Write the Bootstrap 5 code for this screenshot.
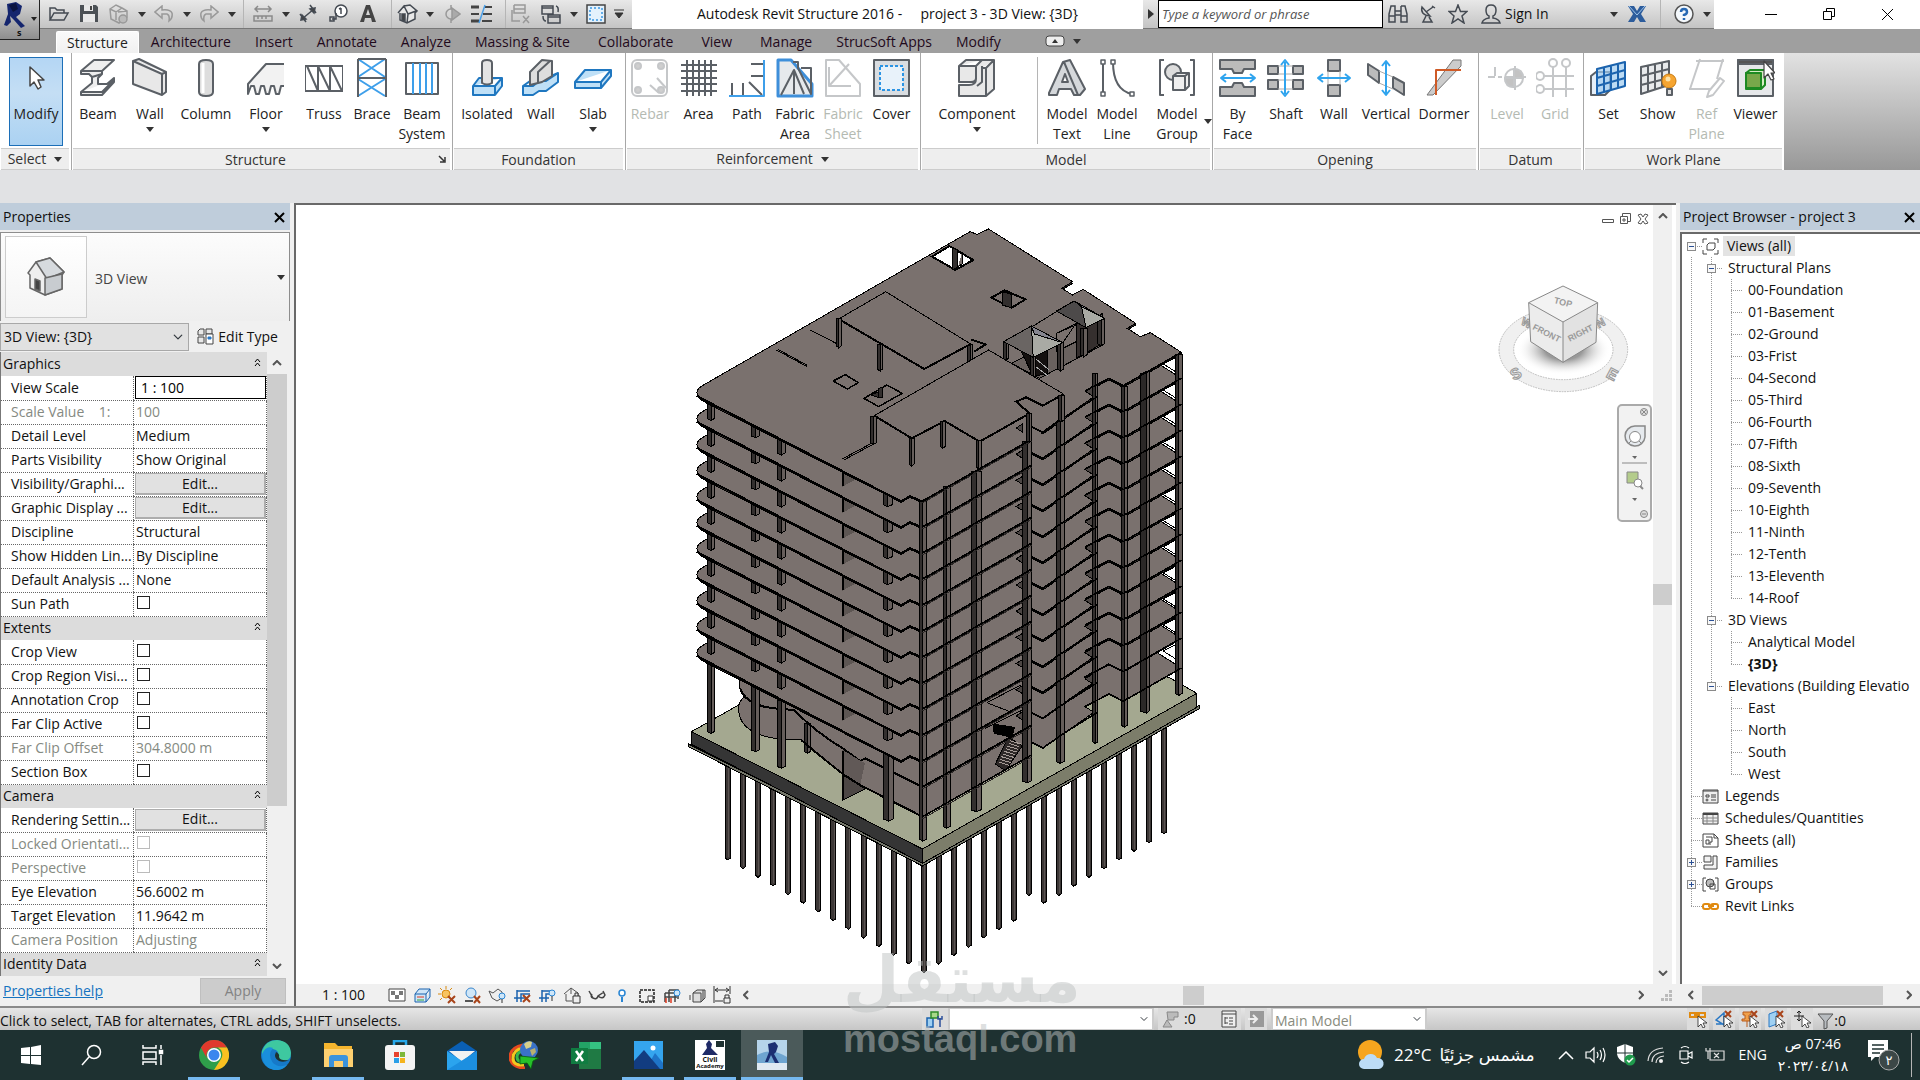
<!DOCTYPE html>
<html lang="en">
<head>
<meta charset="utf-8">
<meta name="viewport" content="width=device-width, initial-scale=1">
<title>Autodesk Revit Structure 2016</title>
<link href="https://cdn.jsdelivr.net/npm/bootstrap@5.3.0/dist/css/bootstrap.min.css" rel="stylesheet">
<style>
html,body{height:100%}
body{font-family:"Open Sans","Noto Sans","DejaVu Sans",sans-serif;font-size:14px;line-height:20px;color:#111;background:#f0f0f0;overflow:hidden}
button{font:inherit;color:inherit;background:none;border:0;padding:0}
svg{display:block;flex:none}
.ico{fill:none;stroke:#444a52;stroke-width:1.5}
.tools{background:linear-gradient(#e8e8e8,#c4c4c4);border-bottom:1px solid #777}
.titlebar{height:29px;background:#fff}
.titlebar button{height:28px}
.appcell{width:40px}
.titlebar .appbtn{z-index:5;left:0;top:0;width:40px;height:40px;background:linear-gradient(#d8d8d8,#8e8e8e);border:1px solid #222;border-left:0;border-top:0}
.t30{width:30px;display:flex;align-items:center;justify-content:center}
.t15{width:15px;display:flex;align-items:center;justify-content:center}
.vsep{width:1px;align-self:stretch;background:#b5b5b5}
.caret{width:0;height:0;border:4px solid transparent;border-top:5px solid #333;border-bottom:0;flex:none}
.kw{width:225px;height:28px;border:1px solid #000;border-radius:0;font-style:italic;font-size:13px;padding:0 3px;background:#fff}
.kw::placeholder{color:#555}
.winbtn{width:58px;display:flex;align-items:center;justify-content:center}
.tabs{height:24px;background:#9f9f9f;padding-left:56px}
.tabs .nav-link{padding:0 12px;height:22px;line-height:22px;color:#1f0a1c;border-radius:2px 2px 0 0}
.tabs .nav-link.active{background:linear-gradient(#fafafa,#f0f0f0);border:1px solid #fff;border-bottom:0;color:#222;padding:0 10px}
.ribbon{height:117px;background:linear-gradient(#e2e2e2,#989898)}
.pane{background:#fff;border-right:1px solid #a8a8a8;display:flex;flex-direction:column}
.pane-body{display:flex;flex:1;padding-top:4px}
.pane-name{height:22px;line-height:22px;background:#eee;border-top:1px solid #ccc;border-bottom:1px solid #ccc;text-align:center;color:#333;margin:0 2px 0 1px}
.rb{display:flex;flex-direction:column;align-items:center;line-height:20px;color:#222;white-space:nowrap;padding-top:1px!important}
.rb svg{width:38px;height:40px;margin-bottom:6px;fill:none;stroke:#5b6066;stroke-width:2;stroke-linejoin:round}
.rb .caret{margin-top:3px}
.rb:disabled{color:#b4bab2}
.rb:disabled svg{opacity:.35}
.rb.modify{background:linear-gradient(#b4d6f4,#c4def4 40%,#abd2f2);border:1px solid #1c6fb8;margin:0 8px 0 9px;width:54px;height:89px;padding-top:0!important}
.w40{width:40px}.w48{width:48px}.w49{width:49px}.w50{width:50px}.w52{width:52px}.w56{width:56px}.w60{width:60px}.w70{width:70px}.w112{width:112px}
.optbar{height:33px;background:#e1e2e4}
.side{background:#f0f0f0}
.side-title{height:27px;background:#bfcddb;padding:1px 5px 0 3px}
.left{width:290px}
.right{width:240px}
.typesel{height:89px;border:1px solid #8d8d8d;border-bottom:0;background:linear-gradient(#fcfcfc,#eee);padding:4px;margin-top:2px}
.thumbbox{width:82px;height:82px;border:1px solid #ccc;background:linear-gradient(#fff,#f4f4f4)}
.instrow{height:31px}
.combo{height:28px;border-radius:0;border:1px solid #a8a8a8;background-color:#e1e1e1;font-size:14px;line-height:20px;padding:2px 20px 2px 3px;color:#111;background-size:12px 10px;background-position:right 4px center}
.props{width:267px;table-layout:fixed;border-collapse:collapse;background:#fff;border-left:1px solid #777;margin:0}
.props td,.props th{height:24px;padding:0 2px;line-height:20px;font-weight:400;border:0;border-bottom:1px dotted #666;white-space:nowrap;overflow:hidden}
.props th[scope=row]{padding:0 0 0 10px}
.props td{border-left:1px dotted #666;border-right:1px dotted #666}
.props .grp th{background:#dcdcdc;border-bottom:0}
.props .off{color:#858a82}
.props input[type=checkbox]{width:13px;height:13px;border-radius:0;border:1px solid #222;margin:0 0 0 1px;vertical-align:0;background:#fff}
.props input:disabled{border-color:#bbb;opacity:1}
.props td.fill{padding:0 0 0 1px}
.editbtn{width:100%;height:22px;background:#e1e1e1;border:2px solid #adadad;border-top-width:1px;border-left-width:1px;display:block;line-height:18px}
.scalebox{width:100%;height:23px;border:1px solid #000;padding:0 5px;appearance:none;background:#fff;display:block}
.sbar{background:#f0f0f0}
.thumb{background:#cdcdcd}
.helprow{padding:1px 4px 2px 3px}
.apply{width:86px;height:26px;background:#ccc;border:1px solid #bfbfbf;color:#838383}
.canvas{background:#fff;border-top:2px solid #696969;border-left:2px solid #696969}
.model{left:364px;top:0;width:560px;height:780px;shape-rendering:crispEdges}
.viewcube{right:24px;top:78px}
.navbar-mini{right:1px;top:199px;width:35px;height:118px;border:2px solid #aaa;border-radius:5px;background:#f2f2f2}
.mdi{right:3px;top:7px}
.tree{background:#fff;border-top:2px solid #696969;border-left:2px solid #696969;padding-top:1px;margin-top:2px}
.tree li{display:flex;align-items:center;height:22px;white-space:nowrap;overflow:hidden}
.tree .c{width:20px;height:22px;flex:none;background-repeat:no-repeat;display:flex;align-items:center;justify-content:center;--v:repeating-linear-gradient(to bottom,#999 0 1px,transparent 1px 2px);--h:repeating-linear-gradient(to right,#999 0 1px,transparent 1px 2px)}
.tree .v{background-image:var(--v);background-size:1px 22px;background-position:9px 0}
.tree .t{background-image:var(--v),var(--h);background-size:1px 22px,11px 1px;background-position:9px 0,9px 11px}
.tree .e{background-image:var(--v),var(--h);background-size:1px 11px,11px 1px;background-position:9px 0,9px 11px}
.tree .s{background-image:var(--h);background-size:11px 1px;background-position:9px 11px}
.pm{width:9px;height:9px;border:1px solid #8a8a8a;background:#f8f8f8;position:relative;margin-right:1px}
.pm::before,.pm.plus::after{content:"";position:absolute;left:1px;top:3px;width:5px;height:1px;background:#2a4f94}
.pm.plus::after{left:3px;top:1px;width:1px;height:5px}
.l2,.l1,.l0{padding-left:6px}
.tree svg{width:17px;height:17px}
.status{height:24px;background:linear-gradient(#e6e6e6,#c6c6c6);border-top:2px solid #8a8a8a;overflow:hidden}
.status .cellb{height:22px;background:#dcdcdc;display:flex;align-items:center;justify-content:center}
.status select{height:24px;border:2px solid #ccc;border-radius:0;background-color:#fff;color:#888b7d;padding:2px 18px 0 2px;font-size:14px;line-height:20px;background-size:10px 8px;background-position:right 3px center;opacity:1}
.status select:disabled{background-color:#fff}
.viewtools-label{padding:0 20px 0 26px}
.seltools{margin-right:74px}
.taskbar{height:50px;background:#1e3131;color:#fff}
.tb{width:62px;height:50px;display:flex;align-items:center;justify-content:center;border-bottom:3px solid transparent!important;padding-top:3px!important}
.tb.sys{width:61px}
.tb.run{background:linear-gradient(#76b9f0,#76b9f0) no-repeat center bottom/52px 3px;border:0!important;padding-top:0!important}
.tb.cur{background:linear-gradient(#76b9f0,#76b9f0) no-repeat center bottom/62px 3px #4b5a5a}
.w30t{width:30px;display:flex;justify-content:center}
.weather{font-size:17px}
.clock{width:76px;line-height:22px}
.wm{left:843px;top:944px;width:234px;z-index:20;color:rgba(190,194,194,.5);text-align:center;pointer-events:none;font-weight:700}
.wm-ar{font-family:"DejaVu Sans",sans-serif;font-size:65px;line-height:72px;height:80px;white-space:nowrap}
.wm-en{font-family:"Liberation Sans",sans-serif;font-size:38px;line-height:30px}
</style>
<script src="https://cdn.jsdelivr.net/npm/bootstrap@5.3.0/dist/js/bootstrap.bundle.min.js"></script>
</head>
<body class="d-flex flex-column vh-100">

<header class="titlebar d-flex position-relative flex-shrink-0">
  <button class="appbtn position-absolute" aria-label="Application menu"><svg width="39" height="39" viewBox="0 0 39 39"><path d="M7 4l9-2 6 4-2 8-4 3 9 9-4 2-7-8-4-4 1 6-4 4-3-1 4-11z" fill="#14256e"/><path d="M9 5l7-2 2 6-5 3z" fill="#0b1440"/><path d="M31 17h6l-3 4z" fill="#222"/><text x="17" y="36" font-size="9" font-weight="700" fill="#111">s</text></svg></button>
  <div class="appcell"></div>
  <div class="tools d-flex align-items-center" style="width:592px">
    <button class="t30 ms-1" aria-label="Open"><svg class="ico" width="22" height="20" viewBox="0 0 22 20"><path d="M2 16V4h5l2 2h7v3M2 16l4-7h14l-4 7z"/></svg></button>
    <button class="t30" aria-label="Save"><svg width="20" height="20" viewBox="0 0 20 20"><path d="M1 1h16l2 2v15H1z" fill="#4b5055"/><path d="M5 1h9v6H5zM4 10h12v8H4z" fill="#e8e8e8"/><path d="M11 2h2v4h-2z" fill="#444"/></svg></button>
    <button class="t30" aria-label="Synchronize"><svg class="ico" style="stroke:#999" width="22" height="22" viewBox="0 0 22 22"><path d="M2 6l6-4 6 3 5 3v6l-8 6-8-4zM2 6l6 3 6-4M8 9v8M10 9l9-1"/><circle cx="15" cy="16" r="4" fill="#bbb"/></svg></button>
    <button class="t15" aria-label="Synchronize options"><span class="caret"></span></button>
    <button class="t30" aria-label="Undo"><svg class="ico" style="stroke:#999" width="20" height="18" viewBox="0 0 20 18"><path d="M8 1L1 7l7 6V9h5q3 1 2 7 4-3 3-8-2-4-10-3z"/></svg></button>
    <button class="t15" aria-label="Undo list"><span class="caret"></span></button>
    <button class="t30" aria-label="Redo"><svg class="ico" style="stroke:#999" width="20" height="18" viewBox="0 0 20 18"><path d="M12 1l7 6-7 6V9H7q-3 1-2 7-4-3-3-8 2-4 10-3z"/></svg></button>
    <button class="t15" aria-label="Redo list"><span class="caret"></span></button>
    <span class="vsep ms-1"></span>
    <button class="t30 ms-1" aria-label="Measure"><svg class="ico" style="stroke:#8a8a8a" width="20" height="18" viewBox="0 0 20 18"><path d="M2 4h16M5 1L2 4l3 3M15 1l3 3-3 3M1 11h18v5H1zM5 11v3m4-3v3m4-3v3"/></svg></button>
    <button class="t15" aria-label="Measure list"><span class="caret"></span></button>
    <button class="t30" aria-label="Aligned dimension"><svg class="ico" width="20" height="20" viewBox="0 0 20 20"><path d="M4 15L16 5M2 10l6 8M12 1l6 8"/><path d="M3 16l1-5 4 4zM17 4l-1 5-4-4z" fill="#444"/></svg></button>
    <button class="t30" aria-label="Tag"><svg class="ico" width="20" height="20" viewBox="0 0 20 20"><circle cx="13" cy="7" r="6" fill="#fff"/><path d="M13 4v6M11 5l2-1M4 15h4V9M2 13h4v4H2z"/></svg></button>
    <button class="t30" aria-label="Text"><svg width="18" height="20" viewBox="0 0 18 20"><path d="M1 18L7 1h4l6 17h-4l-1-4H6l-1 4zM7 11h4L9 5z" fill="#444"/></svg></button>
    <span class="vsep ms-2"></span>
    <button class="t30" aria-label="Default 3D view"><svg class="ico" width="21" height="20" viewBox="0 0 21 20"><path d="M1 9l6-7 6-1 7 6-2 2v6l-8 4-7-3V9M1 9l6-7 4 8-1 9M11 10l8-3" fill="#e8e8e8"/><path d="M5 10h3v7l-3-1z" fill="#444"/></svg></button>
    <button class="t15" aria-label="3D list"><span class="caret"></span></button>
    <button class="t30" aria-label="Section"><svg class="ico" style="stroke:#999" width="18" height="18" viewBox="0 0 18 18"><circle cx="8" cy="9" r="5"/><path d="M8 0v4M8 14v4M9 3l8 6-8 6z" fill="#aaa"/></svg></button>
    <button class="t30" aria-label="Thin lines"><svg width="22" height="20" viewBox="0 0 22 20"><path d="M0 3h8M0 17h8" stroke="#444" stroke-width="3"/><path d="M0 10h8M14 3h7M12 10h9M11 17h10" stroke="#444" stroke-width="2"/><path d="M14 1L8 19" stroke="#4aa0e8" stroke-width="1.5"/></svg></button>
    <span class="vsep ms-2"></span>
    <button class="t30" aria-label="Close hidden windows"><svg class="ico" style="stroke:#999" width="20" height="20" viewBox="0 0 20 20"><path d="M3 1h11v5M3 1v8h11V5H3M1 6v11h8M12 12l6 7M18 12l-6 7" /></svg></button>
    <button class="t30" aria-label="Switch windows"><svg class="ico" width="20" height="20" viewBox="0 0 20 20"><path d="M1 2h11v8H1zM1 4h11M7 11h12v8H7zM7 13h12M15 2q3 1 2 6M2 12q0 5 3 5" fill="none"/></svg></button>
    <button class="t15" aria-label="Window list"><span class="caret"></span></button>
    <button class="t30" aria-label="User interface"><svg width="20" height="20" viewBox="0 0 20 20"><path d="M1 1h18v18H1z" fill="#e3f1fc" stroke="#444" stroke-width="1.5"/><path d="M4 4h12v12H4z" fill="none" stroke="#3a96e2" stroke-width="1.5" stroke-dasharray="2"/></svg></button>
    <button class="t15" aria-label="Customize"><svg width="12" height="10"><path d="M1 1h10M2 4h8L6 9z" stroke="#333" fill="#333"/></svg></button>
  </div>
  <div class="flex-fill text-center text-nowrap pt-1">Autodesk Revit Structure 2016 - &nbsp;&nbsp;&nbsp; project 3 - 3D View: {3D}</div>
  <div class="tools d-flex align-items-center" style="width:571px">
    <button class="t15" aria-label="Collapse search"><svg width="6" height="10"><path d="M0 0l6 5-6 5z" fill="#333"/></svg></button>
    <input class="kw" type="search" aria-label="Search" placeholder="Type a keyword or phrase">
    <button class="t30" aria-label="Find"><svg class="ico" width="20" height="20" viewBox="0 0 20 20"><path d="M1 18V10l2-8h4v16zM13 2h4l2 8v8h-6V2M7 7h6M7 11h6M1 12h6M13 12h6"/></svg></button>
    <button class="t30" aria-label="Subscription"><svg class="ico" width="18" height="20" viewBox="0 0 18 20"><path d="M3 3q-2 8 8 9zM7 8l7-5M7 12l-3 6h9l-3-5M13 2l3 2"/></svg></button>
    <button class="t30" aria-label="Favorites"><svg class="ico" width="20" height="20" viewBox="0 0 20 20"><path d="M10 1l2.500 6.500H19l-5 4.500 2 7-6-4-6 4 2-7-5-4.500h6.500z"/></svg></button>
    <button class="d-flex align-items-center ps-2 pe-5"><svg class="ico me-1" width="20" height="20" viewBox="0 0 20 20"><path d="M10 1q5 0 5 5t-3 6v2q6 1 7 5H1q1-4 7-5v-2Q5 11 5 6t5-5z"/></svg>Sign In</button>
    <button class="t15 ms-auto me-2" aria-label="Account list"><span class="caret"></span></button>
    <button class="t15 me-3" aria-label="Exchange"><svg width="18" height="18" viewBox="0 0 18 18"><path d="M0 1h6l3 5 3-5h6l-5 8 5 8h-6l-3-5-3 5H0l5-8z" fill="#2c5c9c"/><path d="M1 1l8 9 8-9" stroke="#9ec4ea" fill="none"/></svg></button>
    <span class="vsep"></span>
    <button class="t30 ms-2" aria-label="Help"><svg width="20" height="20" viewBox="0 0 20 20"><circle cx="10" cy="10" r="9" fill="#f4f8fc" stroke="#555" stroke-width="1.5"/><path d="M7 8q0-3 3-3t3 3q0 2-3 3v1M10 14v2" stroke="#2668b4" stroke-width="2.500" fill="none"/></svg></button>
    <button class="t15" aria-label="Help list"><span class="caret"></span></button>
  </div>
  <div class="d-flex ms-4" style="width:182px">
    <button class="winbtn ms-1" aria-label="Minimize"><svg width="12" height="12"><path d="M0 6.500h12" stroke="#000"/></svg></button>
    <button class="winbtn" aria-label="Restore"><svg width="12" height="12" fill="none" stroke="#000"><path d="M.5 3.500h8v8h-8zM3.500 3V.5h8v8H9"/></svg></button>
    <button class="winbtn" aria-label="Close"><svg width="13" height="13" stroke="#000"><path d="M1 1l11 11M12 1L1 12"/></svg></button>
  </div>
</header>

<nav class="tabs nav flex-shrink-0 align-items-end flex-nowrap">
  <a class="nav-link active" href="#">Structure</a><a class="nav-link" href="#">Architecture</a><a class="nav-link" href="#">Insert</a><a class="nav-link" href="#">Annotate</a><a class="nav-link" href="#">Analyze</a><a class="nav-link" href="#">Massing &amp; Site</a><a class="nav-link ms-1" href="#">Collaborate</a><a class="nav-link ms-1" href="#">View</a><a class="nav-link ms-1" href="#">Manage</a><a class="nav-link" href="#">StrucSoft Apps</a><a class="nav-link" href="#">Modify</a>
  <button class="d-flex align-items-center gap-2 ms-4 ps-2 align-self-center" aria-label="Minimize ribbon"><svg width="20" height="12" viewBox="0 0 20 12"><rect x="1" y="1" width="18" height="10" rx="3" fill="#eee" stroke="#444"/><path d="M7 8h6l-3-4z" fill="#333"/></svg><span class="caret"></span></button>
</nav>

<section class="ribbon d-flex flex-shrink-0">
  <div class="pane"><div class="pane-body"><button class="rb modify"><svg viewBox="0 0 38 40"><path d="M13 9v19l4-4 4 7 3-2-3-7h6z" fill="#fff" stroke="#444" stroke-width="1.500"/></svg>Modify</button></div><div class="pane-name d-flex align-items-center justify-content-center gap-2">Select <span class="caret"></span></div></div>

  <div class="pane"><div class="pane-body">
    <button class="rb w52"><svg viewBox="0 0 38 40"><path d="M2 13L15 2h20L23 13v3L19 20v6h9l7-6v4L23 37H2v-3l11-9v-6l-3-3H2zM2 13h21M13 19l10-3M2 34h21l12-12" fill="#eee"/></svg>Beam</button>
    <button class="rb w52"><svg viewBox="0 0 38 40"><path d="M2 3l6-2 27 13v20l-4 3L2 26zM2 3l29 13 4-2M31 16v21" fill="#e8e8e8"/></svg>Wall<span class="caret"></span></button>
    <button class="rb w60"><svg viewBox="0 0 38 40"><path d="M12 6q0-4 7-4t7 4v28q0 4-7 4t-7-4z" fill="#ddd"/><path d="M16 5v30" stroke="#fff" stroke-width="3"/></svg>Column</button>
    <button class="rb w60"><svg viewBox="0 0 38 40"><path d="M37 6H19L1 26v10l3-8 3 0 2 8h3l2-8h3l2 8h3l2-8h3l2 8h3l2-8h3" fill="#f2f2f2"/></svg>Floor<span class="caret"></span></button>
    <button class="rb w56"><svg viewBox="0 0 38 40"><path d="M0 8h38v25H0zM2 8l11 25V8l12 25V8l12 25"/></svg>Truss</button>
    <button class="rb w40"><svg viewBox="0 0 38 40"><path d="M5 1l27 18M32 1L5 19m0 2l27 17M32 21L5 38" stroke="#3e9fea"/><path d="M5 1v38M33 1v38M5 1h28M5 20h28"/></svg>Brace</button>
    <button class="rb w60"><svg viewBox="0 0 38 40"><path d="M3 5h32v31H3z"/><path d="M10 5v31M17 5v31M23 5v31M29 5v31" stroke="#3e9fea"/></svg>Beam<br>System</button>
  </div><div class="pane-name d-flex"><span class="flex-fill">Structure</span><svg class="align-self-center me-1" width="8" height="8"><path d="M1 1l5 5M7 2v5H2" stroke="#333" stroke-width="1.500" fill="none"/></svg></div></div>

  <div class="pane"><div class="pane-body ps-1 pe-1">
    <button class="rb w60"><svg viewBox="0 0 38 40"><path d="M5 28l6-8h23v8l-7 9H5zM5 28h22l7-8M27 28v9" fill="#bfe0f7" stroke="#1f77c0"/><path d="M14 5q0-3 5-3t5 3v20q-5 3-10 0z" fill="#e4e4e4"/></svg>Isolated</button>
    <button class="rb w48"><svg viewBox="0 0 38 40"><path d="M1 28l7-5h10l18-8v9L24 33h-7l-6 4H1zM1 28h10l6-5h7l12-8" fill="#bfe0f7" stroke="#1f77c0"/><path d="M8 14L20 2l10 1v15l-10 6-12 3zM16 26V14L28 3" fill="#ddd"/></svg>Wall</button>
    <button class="rb w56"><svg viewBox="0 0 38 40"><path d="M1 24l10-12h26v6L27 30H1zM1 24h26l10-12M27 24v6" fill="#bfe0f7" stroke="#1f77c0"/></svg>Slab<span class="caret"></span></button>
  </div><div class="pane-name">Foundation</div></div>

  <div class="pane"><div class="pane-body pe-1">
    <button class="rb w48" disabled><svg viewBox="0 0 38 40"><rect x="1" y="2" width="35" height="36" rx="5"/><g fill="#777"><circle cx="7" cy="8" r="3"/><circle cx="30" cy="8" r="3"/><circle cx="7" cy="32" r="3"/><circle cx="30" cy="32" r="3"/></g><path d="M19 27l9 8M26 20l9 10"/></svg>Rebar</button>
    <button class="rb w49"><svg viewBox="0 0 38 40"><path d="M7 2v36M13 2v36M19 2v36M25 2v36M31 2v36M1 7h36M1 13h36M1 20h36M1 26h36M1 33h36"/></svg>Area</button>
    <button class="rb w48"><svg viewBox="0 0 38 40"><path d="M4 25v12M15 25v12M23 6h12M23 18h12M21 24l13 13"/><path d="M1 38h35V2" stroke="#3e9fea" stroke-width="2"/></svg>Path</button>
    <button class="rb w48"><svg viewBox="0 0 38 40"><path d="M2 2h13l21 24v12H2z" fill="#e6e9ec" stroke="#3e8fda" stroke-width="3"/><path d="M5 37L18 12l10 24M18 12v24M25 10h10v26L22 10v-6h-5"/></svg>Fabric<br>Area</button>
    <button class="rb w48" disabled><svg viewBox="0 0 38 40"><path d="M2 2h13l21 24v12H2zM5 9v19h22M5 28l20-22"/></svg>Fabric<br>Sheet</button>
    <button class="rb w49"><svg viewBox="0 0 38 40"><path d="M1 2h35v36H1z" fill="#d9dde1"/><path d="M7 8h23v24H7z" fill="#e8f2fa" stroke="#2b94e4" stroke-dasharray="3 2"/></svg>Cover</button>
  </div><div class="pane-name d-flex align-items-center justify-content-center gap-2">Reinforcement <span class="caret"></span></div></div>

  <div class="pane"><div class="pane-body">
    <button class="rb w112"><svg viewBox="0 0 38 40"><path d="M1 8l7-6h28v29l-8 7H1V27h10q7 0 7-6V8zM1 8v16h12q5 0 5-4V8l6-6M1 8h17M24 8v16l-5 4M28 10v28M24 10h4l8-8" fill="#e8e8e8"/></svg>Component<span class="caret"></span></button>
    <span class="vsep mx-1 mb-1"></span>
    <button class="rb w50"><svg viewBox="0 0 38 40"><path d="M1 35L15 4l7-2 15 29-5 6h-6l-3-6H11l-2 6H1zM14 24h6l-3-8zM16 4l14 33" fill="#d5d8db"/></svg>Model<br>Text</button>
    <button class="rb w50"><svg viewBox="0 0 38 40"><path d="M5 4v32M15 4q0 28 19 32"/><g fill="#fff" stroke-width="1.500"><path d="M3 2h4v4H3zM3 34h4v4H3zM13 2h4v4h-4zM32 34h4v4h-4z"/></g></svg>Model<br>Line</button>
    <button class="rb w70 position-relative"><svg viewBox="0 0 38 40"><path d="M6 2H2v35h4M32 2h4v35h-4"/><circle cx="15" cy="14" r="8" fill="#ddd"/><path d="M15 18l4-3h12v13l-4 4H15z M15 18h12v14M27 18l4-3" fill="#eee"/></svg>Model<br>Group<span class="caret position-absolute end-0 bottom-0 mb-4"></span></button>
  </div><div class="pane-name">Model</div></div>

  <div class="pane"><div class="pane-body pe-1">
    <button class="rb w49"><svg viewBox="0 0 38 40"><path d="M1 2h35v9H25l-2 4h-8l-2-4H1zM1 38v-9h12l2-4h8l2 4h11v9z" fill="#bbb"/><path d="M3 20h32M7 16l-5 4 5 4M31 16l5 4-5 4" stroke="#2fa4ee"/></svg>By<br>Face</button>
    <button class="rb w48"><svg viewBox="0 0 38 40"><path d="M1 8h10v8H1zM26 8h10v8H26zM1 22h10v9H1zM26 22h10v9H26z" fill="#bbb"/><path d="M11 8h15M11 31h15M11 16h15M11 22h15" stroke="#aaa" stroke-width="1"/><path d="M18 4v32M14 7l4-5 4 5M14 33l4 5 4-5" stroke="#2fa4ee"/></svg>Shaft</button>
    <button class="rb w48"><svg viewBox="0 0 38 40"><path d="M13 2h12v11H13zM13 27h12v11H13z" fill="#bbb"/><path d="M13 13v14M25 13v14" stroke="#aaa" stroke-width="1"/><path d="M4 20h30M8 16l-5 4 5 4M30 16l5 4-5 4" stroke="#2fa4ee"/></svg>Wall</button>
    <button class="rb w56"><svg viewBox="0 0 38 40"><path d="M1 6l11 7v12L1 17zM26 19l11 6v12l-11-7z" fill="#bbb"/><path d="M12 13l14 6M12 25l14 6" stroke="#aaa" stroke-width="1"/><path d="M19 4v32M15 8l4-5 4 5M15 32l4 5 4-5" stroke="#2fa4ee"/></svg>Vertical</button>
    <button class="rb w60"><svg viewBox="0 0 38 40"><path d="M2 37L28 2h8v6L8 37z" fill="#ccc" stroke="#777" stroke-width="1"/><path d="M11 37V12h25" stroke="#cf5a26" stroke-width="2"/></svg>Dormer</button>
  </div><div class="pane-name">Opening</div></div>

  <div class="pane"><div class="pane-body px-1">
    <button class="rb w48" disabled><svg viewBox="0 0 38 40"><path d="M0 19h7m3 0h4m3 0h21M27 8v24M7 9v9" /><circle cx="26" cy="20" r="9"/><path d="M26 11v9h9q0-9-9-9zM26 29v-9h-9q0 9 9 9z" fill="#555"/></svg>Level</button>
    <button class="rb w48" disabled><svg viewBox="0 0 38 40"><circle cx="17" cy="5" r="4"/><circle cx="30" cy="5" r="4"/><circle cx="4" cy="18" r="4"/><circle cx="4" cy="31" r="4"/><path d="M17 9v30M30 9v30M8 18h30M8 31h30"/></svg>Grid</button>
  </div><div class="pane-name">Datum</div></div>

  <div class="pane border-0"><div class="pane-body pe-1">
    <button class="rb w49"><svg viewBox="0 0 38 40"><path d="M1 18l5-4h14v18l-5 5H1z" fill="#e4eef8"/><path d="M7 11l28-7v24L7 36zM14 9v25M21 7v25M28 6v24M7 20l28-8M7 28l28-8" fill="#9fccf0" fill-opacity=".7" stroke="#1b63ae"/></svg>Set</button>
    <button class="rb w49"><svg viewBox="0 0 38 40"><path d="M2 9l28-6v24L2 36zM9 8v26M16 6v26M23 5v24M2 18l28-7M2 27l28-7" fill="#e8eaec"/><circle cx="30" cy="23" r="7" fill="#f6a531" stroke="#c77a10" stroke-width="1"/><circle cx="29" cy="21" r="2.500" fill="#fde3a8" stroke="none"/><path d="M28 31h5v6h-5z" fill="#ddd"/></svg>Show</button>
    <button class="rb w49" disabled><svg viewBox="0 0 38 40"><path d="M8 3h28M12 1L2 31h20M35 1l-6 20M1 31h3M32 20l4 3-11 14-6 2 2-6z"/></svg>Ref<br>Plane</button>
    <button class="rb w49"><svg viewBox="0 0 38 40"><path d="M1 2h35v36H1z" fill="#e6e8ea"/><path d="M1 2h35v4H1z" fill="#555"/><path d="M9 15l4-3h15v15l-4 4H9z" fill="#d6edc4" stroke="#1d8a22"/><path d="M9 15h15v15H9z" fill="#78a84a" stroke="#1d8a22"/><path d="M27 3v17l4-4 3 6 3-1-3-6h4z" fill="#fff" stroke="#444" stroke-width="1.200"/></svg>Viewer</button>
  </div><div class="pane-name">Work Plane</div></div>
</section>
<div class="optbar flex-shrink-0"></div>

<main class="d-flex flex-fill" style="min-height:0">
  <aside class="side left d-flex flex-column flex-shrink-0">
    <div class="side-title d-flex align-items-center justify-content-between"><span>Properties</span><button aria-label="Close properties"><svg width="11" height="11" stroke="#000" stroke-width="2"><path d="M1 1l9 9M10 1l-9 9"/></svg></button></div>
    <div class="typesel d-flex align-items-center">
      <div class="thumbbox d-flex align-items-center justify-content-center"><svg width="38" height="40" viewBox="0 0 38 40" stroke="#666" stroke-width="1.500" stroke-linejoin="round"><path d="M1 16L9 5 23 1l14 14-2 3v14L18 38 3 31V18z" fill="#eee"/><path d="M9 5l11 17 17-7L23 1z" fill="#d6dade"/><path d="M18 21v17l17-6V17z" fill="#c8ccd0"/><path d="M8 22l5 2v10l-5-2z" fill="#444"/></svg></div>
      <span class="ps-1 pt-1 ms-1 flex-fill" style="color:#444">3D View</span><span class="caret"></span>
    </div>
    <div class="instrow d-flex align-items-center">
      <select class="combo form-select w-auto flex-fill" aria-label="Instance"><option>3D View: {3D}</option></select>
      <button class="d-flex align-items-center gap-1 ms-2 pe-2 me-1"><svg width="17" height="17" viewBox="0 0 17 17" fill="#e8e8e8" stroke="#444"><path d="M1 3l2-2h4v6H1zM9 1h6v5H9zM1 9h6v6H1z"/><path d="M9 6h7v10H9z" fill="#fff"/><path d="M11 9h3v2h-3z" fill="#2a78c4" stroke="#2a78c4"/></svg>Edit Type</button>
    </div>
    <div class="d-flex flex-fill overflow-hidden align-items-stretch" style="min-height:0">
      <div><table class="props">
        <colgroup><col style="width:133px"><col></colgroup>
        <tbody>
        <tr class="grp"><th colspan="2">Graphics<svg class="float-end me-1 mt-1" width="7" height="9" stroke="#000" fill="none"><path d="M1 4l2.500-3L6 4M1 8l2.500-3L6 8"/></svg></th></tr>
        <tr><th scope="row">View Scale</th><td class="fill"><select class="scalebox" aria-label="View Scale"><option>1 : 100</option></select></td></tr>
        <tr class="off"><th scope="row">Scale Value &nbsp;&nbsp; 1:</th><td>100</td></tr>
        <tr><th scope="row">Detail Level</th><td>Medium</td></tr>
        <tr><th scope="row">Parts Visibility</th><td>Show Original</td></tr>
        <tr><th scope="row">Visibility/Graphi...</th><td class="fill"><button class="editbtn">Edit...</button></td></tr>
        <tr><th scope="row">Graphic Display ...</th><td class="fill"><button class="editbtn">Edit...</button></td></tr>
        <tr><th scope="row">Discipline</th><td>Structural</td></tr>
        <tr><th scope="row">Show Hidden Lin...</th><td>By Discipline</td></tr>
        <tr><th scope="row">Default Analysis ...</th><td>None</td></tr>
        <tr><th scope="row">Sun Path</th><td><input class="form-check-input" type="checkbox" aria-label="Sun Path"></td></tr>
        <tr class="grp"><th colspan="2">Extents<svg class="float-end me-1 mt-1" width="7" height="9" stroke="#000" fill="none"><path d="M1 4l2.500-3L6 4M1 8l2.500-3L6 8"/></svg></th></tr>
        <tr><th scope="row">Crop View</th><td><input class="form-check-input" type="checkbox" aria-label="Crop View"></td></tr>
        <tr><th scope="row">Crop Region Visi...</th><td><input class="form-check-input" type="checkbox" aria-label="Crop Region Visible"></td></tr>
        <tr><th scope="row">Annotation Crop</th><td><input class="form-check-input" type="checkbox" aria-label="Annotation Crop"></td></tr>
        <tr><th scope="row">Far Clip Active</th><td><input class="form-check-input" type="checkbox" aria-label="Far Clip Active"></td></tr>
        <tr class="off"><th scope="row">Far Clip Offset</th><td>304.8000 m</td></tr>
        <tr><th scope="row">Section Box</th><td><input class="form-check-input" type="checkbox" aria-label="Section Box"></td></tr>
        <tr class="grp"><th colspan="2">Camera<svg class="float-end me-1 mt-1" width="7" height="9" stroke="#000" fill="none"><path d="M1 4l2.500-3L6 4M1 8l2.500-3L6 8"/></svg></th></tr>
        <tr><th scope="row">Rendering Settin...</th><td class="fill"><button class="editbtn">Edit...</button></td></tr>
        <tr class="off"><th scope="row">Locked Orientati...</th><td><input class="form-check-input" type="checkbox" disabled aria-label="Locked Orientation"></td></tr>
        <tr class="off"><th scope="row">Perspective</th><td><input class="form-check-input" type="checkbox" disabled aria-label="Perspective"></td></tr>
        <tr><th scope="row">Eye Elevation</th><td>56.6002 m</td></tr>
        <tr><th scope="row">Target Elevation</th><td>11.9642 m</td></tr>
        <tr class="off"><th scope="row">Camera Position</th><td>Adjusting</td></tr>
        <tr class="grp"><th colspan="2">Identity Data<svg class="float-end me-1 mt-1" width="7" height="9" stroke="#000" fill="none"><path d="M1 4l2.500-3L6 4M1 8l2.500-3L6 8"/></svg></th></tr>
        </tbody>
      </table></div>
      <div class="sbar d-flex flex-column align-items-center" style="width:20px">
        <svg class="my-2" width="10" height="6" fill="none" stroke="#555" stroke-width="2"><path d="M1 5l4-4 4 4"/></svg>
        <div class="thumb w-100" style="height:432px"></div>
        <svg class="mt-auto mb-2" width="10" height="6" fill="none" stroke="#555" stroke-width="2"><path d="M1 1l4 4 4-4"/></svg>
      </div>
    </div>
    <div class="helprow d-flex justify-content-between align-items-center"><a href="#" style="color:#1573c0">Properties help</a><button class="apply" disabled>Apply</button></div>
  </aside>

  <section class="canvas d-flex flex-column flex-fill ms-1 position-relative" style="min-width:0">
    <div class="d-flex flex-fill" style="min-height:0">
      <div class="flex-fill position-relative overflow-hidden">
        <svg id="model" class="model position-absolute" viewBox="0 15 1568 2340" preserveAspectRatio="none"></svg>
        <svg class="viewcube position-absolute" width="132" height="112" viewBox="50 250 396 336">
          <defs><radialGradient id="sh"><stop offset=".4" stop-color="#999"/><stop offset="1" stop-color="#fff" stop-opacity="0"/></radialGradient></defs>
          <path d="M56 450a193 126 0 1 0 386 0a193 126 0 1 0-386 0zM100 450a149 90 0 1 0 298 0a149 90 0 1 0-298 0z" fill="#f0f0f0" fill-rule="evenodd" stroke="#bbb" stroke-width="3" stroke-dasharray="5 3"/>
          <ellipse cx="250" cy="450" rx="140" ry="76" fill="url(#sh)"/>
          <g font-family="Liberation Sans,sans-serif" font-weight="700" text-anchor="middle" font-size="46" fill="#e4e4e4" stroke="#999" stroke-width="3"><text transform="translate(114,536) rotate(-28)">S</text><text transform="translate(388,538) rotate(28)">E</text><text transform="translate(134,380) rotate(28)" font-size="34">W</text><text transform="translate(366,380) rotate(-28)" font-size="34">N</text></g>
          <path d="M248 259l104 50-104 58-103-58z" fill="#f3f3f3"/><path d="M145 309l103 58v121l-97-62z" fill="#ececec"/><path d="M352 309l-104 58v121l99-60z" fill="#e2e2e2"/>
          <path d="M248 259l104 50-104 58-103-58zM145 309l6 117 97 62 99-60 5-119M248 367v121" fill="none" stroke="#888" stroke-width="3"/>
          <g font-family="Liberation Sans,sans-serif" font-weight="700" fill="#9a9a9a" text-anchor="middle" font-size="27"><text transform="translate(246,317) rotate(14)">TOP</text><text transform="translate(195,408) rotate(27)" font-size="26">FRONT</text><text transform="translate(304,408) rotate(-27)" font-size="26">RIGHT</text></g>
        </svg>
        <div class="navbar-mini position-absolute d-flex flex-column align-items-center">
          <svg width="31" height="114" viewBox="0 0 31 114" fill="none" stroke="#888"><circle cx="25" cy="6" r="3.500" fill="#ddd"/><path d="M23 4l4 4M27 4l-4 4"/><path d="M16 20h10v11a10 10 0 1 1-10-11z" fill="#e6eaee" stroke-width="1.500"/><circle cx="16" cy="31" r="5.500" fill="#fff"/><path d="M9 38l3-3M23 38l-3-3"/><path d="M13 50h5l-2 3zM13 92h5l-2 3z" fill="#666" stroke="none"/><path d="M3 57h25"/><path d="M8 66h11v11H8z" fill="#b4cc8c"/><circle cx="19" cy="77" r="4" fill="#fff"/><path d="M21 80l3 3" stroke-width="2"/><circle cx="25" cy="108" r="3.500" fill="#ddd"/><path d="M23 108h4"/></svg>
        </div>
        <svg class="mdi position-absolute" width="50" height="14" fill="none" stroke="#555"><path d="M2.500 7.500h11v3h-11z"/><path d="M20.500 4.500h7v7h-7zM22.500 4V1.500h8v8H28M23 7h2v2h-2z"/><path d="M38 3l3-1 2 3 2-3 3 1-3 4 3 4-3 1-2-3-2 3-3-1 3-4z"/></svg>
      </div>
      <div class="sbar d-flex flex-column align-items-center me-1" style="width:19px">
        <svg class="mt-2" width="10" height="6" fill="none" stroke="#555" stroke-width="2"><path d="M1 5l4-4 4 4"/></svg>
        <div class="flex-fill"></div><div class="thumb w-100" style="height:21px"></div><div style="height:365px"></div>
        <svg class="mb-2" width="10" height="6" fill="none" stroke="#555" stroke-width="2"><path d="M1 1l4 4 4-4"/></svg>
      </div>
    </div>
    <div class="sbar d-flex align-items-center" style="height:22px">
      <span class="viewtools-label">1 : 100</span>
      <div class="d-flex" id="viewtools"></div>
      <svg class="ms-2" width="6" height="10" fill="none" stroke="#555" stroke-width="2"><path d="M5 1L1 5l4 4"/></svg>
      <div class="flex-fill"></div><div class="thumb" style="width:21px;height:19px"></div><div style="width:434px"></div>
      <svg width="6" height="10" fill="none" stroke="#555" stroke-width="2"><path d="M1 1l4 4-4 4"/></svg>
      <svg class="ms-3 me-1" width="12" height="12" fill="#bbb"><path d="M9 1h3v3H9zM5 5h3v3H5zM9 5h3v3H9zM1 9h3v3H1zM5 9h3v3H5zM9 9h3v3H9z"/></svg>
    </div>
  </section>

  <aside class="side right d-flex flex-column flex-shrink-0 ms-1">
    <div class="side-title d-flex align-items-center justify-content-between"><span class="text-nowrap">Project Browser - project 3</span><button aria-label="Close browser"><svg width="11" height="11" stroke="#000" stroke-width="2"><path d="M1 1l9 9M10 1l-9 9"/></svg></button></div>
    <ul class="tree list-unstyled mb-0 flex-fill overflow-hidden">
      <li><span class="c s"><i class="pm"></i></span><svg viewBox="0 0 17 17" fill="none" stroke="#444"><path d="M1 5V1h4M12 1h4v4M16 12v4h-4M5 16H1v-4M5 7l2-2h6v5l-2 2H5z"/></svg><span class="ms-1 px-1" style="background:#e3e3e3">Views (all)</span></li>
      <li><span class="c v"></span><span class="c t"><i class="pm"></i></span><span class="l1">Structural Plans</span></li>
      <li><span class="c v"></span><span class="c v"></span><span class="c t"></span><span class="l2">00-Foundation</span></li>
      <li><span class="c v"></span><span class="c v"></span><span class="c t"></span><span class="l2">01-Basement</span></li>
      <li><span class="c v"></span><span class="c v"></span><span class="c t"></span><span class="l2">02-Ground</span></li>
      <li><span class="c v"></span><span class="c v"></span><span class="c t"></span><span class="l2">03-Frist</span></li>
      <li><span class="c v"></span><span class="c v"></span><span class="c t"></span><span class="l2">04-Second</span></li>
      <li><span class="c v"></span><span class="c v"></span><span class="c t"></span><span class="l2">05-Third</span></li>
      <li><span class="c v"></span><span class="c v"></span><span class="c t"></span><span class="l2">06-Fourth</span></li>
      <li><span class="c v"></span><span class="c v"></span><span class="c t"></span><span class="l2">07-Fifth</span></li>
      <li><span class="c v"></span><span class="c v"></span><span class="c t"></span><span class="l2">08-Sixth</span></li>
      <li><span class="c v"></span><span class="c v"></span><span class="c t"></span><span class="l2">09-Seventh</span></li>
      <li><span class="c v"></span><span class="c v"></span><span class="c t"></span><span class="l2">10-Eighth</span></li>
      <li><span class="c v"></span><span class="c v"></span><span class="c t"></span><span class="l2">11-Ninth</span></li>
      <li><span class="c v"></span><span class="c v"></span><span class="c t"></span><span class="l2">12-Tenth</span></li>
      <li><span class="c v"></span><span class="c v"></span><span class="c t"></span><span class="l2">13-Eleventh</span></li>
      <li><span class="c v"></span><span class="c v"></span><span class="c e"></span><span class="l2">14-Roof</span></li>
      <li><span class="c v"></span><span class="c t"><i class="pm"></i></span><span class="l1">3D Views</span></li>
      <li><span class="c v"></span><span class="c v"></span><span class="c t"></span><span class="l2">Analytical Model</span></li>
      <li><span class="c v"></span><span class="c v"></span><span class="c e"></span><b class="l2">{3D}</b></li>
      <li><span class="c v"></span><span class="c e"><i class="pm"></i></span><span class="l1">Elevations (Building Elevatio</span></li>
      <li><span class="c v"></span><span class="c"></span><span class="c t"></span><span class="l2">East</span></li>
      <li><span class="c v"></span><span class="c"></span><span class="c t"></span><span class="l2">North</span></li>
      <li><span class="c v"></span><span class="c"></span><span class="c t"></span><span class="l2">South</span></li>
      <li><span class="c v"></span><span class="c"></span><span class="c e"></span><span class="l2">West</span></li>
      <li><span class="c t"></span><svg viewBox="0 0 17 17" fill="none" stroke="#444"><path d="M1 2h15v13H1z" fill="#eee"/><path d="M1 3h15M4 7h3v2H4zM9 7h5M9 9h5M9 12h5" /><circle cx="5" cy="12" r="1"/></svg><span class="l0">Legends</span></li>
      <li><span class="c t"></span><svg viewBox="0 0 17 17" fill="none" stroke="#444"><path d="M1 3h15v11H1z" fill="#eee"/><path d="M1 4h15" stroke-width="2"/><path d="M1 8h15M1 11h15M5 5v9M11 5v9" stroke="#888"/></svg><span class="l0">Schedules/Quantities</span></li>
      <li><span class="c t"></span><svg viewBox="0 0 17 17" fill="none" stroke="#444"><path d="M1 2h11l4 4v9H1zM12 2v4h4M4 5h6v5H8v3M4 8h3v4H4z"/></svg><span class="l0">Sheets (all)</span></li>
      <li><span class="c t"><i class="pm plus"></i></span><svg viewBox="0 0 17 17" fill="none" stroke="#444"><path d="M2 2h7v6H2zM11 2h4v13H2v-4h9z" fill="#f2f2f2"/></svg><span class="l0">Families</span></li>
      <li><span class="c t"><i class="pm plus"></i></span><svg viewBox="0 0 17 17" fill="none" stroke="#444"><path d="M4 2H1v13h3M13 2h3v13h-3"/><circle cx="8" cy="7" r="4" fill="#bbb"/><path d="M8 8h5v5H8z"/></svg><span class="l0">Groups</span></li>
      <li><span class="c e"></span><svg viewBox="0 0 17 17" fill="none" stroke="#e08a10" stroke-width="2"><rect x="1" y="6" width="7" height="5" rx="2"/><rect x="9" y="6" width="7" height="5" rx="2"/><path d="M6 8h6"/></svg><span class="l0">Revit Links</span></li>
    </ul>
    <div class="sbar d-flex align-items-center ps-2 pe-2" style="height:22px"><svg width="6" height="10" fill="none" stroke="#555" stroke-width="2"><path d="M5 1L1 5l4 4"/></svg><div class="thumb ms-2" style="width:181px;height:19px"></div><svg class="ms-auto" width="6" height="10" fill="none" stroke="#555" stroke-width="2"><path d="M1 1l4 4-4 4"/></svg></div>
  </aside>
</main>

<footer class="status d-flex align-items-center flex-shrink-0">
  <span class="text-nowrap pt-1" style="width:922px">Click to select, TAB for alternates, CTRL adds, SHIFT unselects.</span>
  <div class="cellb" style="width:26px"><svg width="18" height="18" viewBox="0 0 18 18" stroke-width="1.500"><path d="M1 8h6v9H1z" fill="#9fd0f2" stroke="#1b63ae"/><path d="M5 2h7v6H5z" fill="#a8d88a" stroke="#2f8a2a"/><path d="M14 8v9M12 6v3h4V6" fill="none" stroke="#2b4f9a"/></svg></div>
  <select class="form-select" style="width:206px" disabled aria-label="Active workset"><option></option></select>
  <div class="cellb ms-1 justify-content-start ps-1" style="width:58px"><svg class="me-1" width="18" height="18" viewBox="0 0 18 18" fill="#999"><path d="M5 2h11v5h-4v3H6zM1 17l4-7 5 7z" fill="#bbb" stroke="#888"/></svg>:0</div>
  <div class="cellb" style="width:25px"><svg width="16" height="18" viewBox="0 0 16 18" fill="#eee" stroke="#444"><path d="M1 1h14v16H1zM1 4h14M4 7v7M4 8h3M4 13h3M8 8h4M8 11h4M8 14h4"/></svg></div>
  <div class="cellb ms-1" style="width:22px"><svg width="16" height="16" viewBox="0 0 16 16"><path d="M2 0h14v16H2z" fill="#999"/><path d="M0 8h8M5 4l4 4-4 4" stroke="#eee" stroke-width="2" fill="none"/></svg></div>
  <select class="form-select ms-1" style="width:156px" disabled aria-label="Design option"><option>Main Model</option></select>
  <div class="seltools d-flex gap-1 ms-auto text-nowrap" id="seltools"></div>
</footer>

<footer class="taskbar d-flex align-items-center flex-shrink-0">
  <button class="tb sys" aria-label="Start"><svg width="20" height="20" fill="#fff"><path d="M0 3l9-1v8H0zM10 2l10-2v10H10zM0 11h9v8l-9-1zM10 11h10v9l-10-1z"/></svg></button>
  <button class="tb sys" aria-label="Search"><svg width="22" height="22" fill="none" stroke="#fff" stroke-width="1.500"><circle cx="13" cy="8" r="6.500"/><path d="M8 13l-7 8"/></svg></button>
  <button class="tb sys" aria-label="Task view"><svg width="22" height="20" fill="none" stroke="#fff" stroke-width="1.500"><path d="M1 0v3h13V0M1 7h13v7H1zM1 20v-3h13v3M19 0v4M19 10v10"/><path d="M17.500 5.500h3v3h-3z" fill="#fff"/></svg></button>
  <button class="tb run" aria-label="Chrome"><svg width="30" height="30" viewBox="0 0 30 30"><circle cx="15" cy="15" r="15" fill="#2f9e4a"/><path d="M2 7.500A15 15 0 0 1 28 7.500H15a8 8 0 0 0-7 11z" fill="#e0392c"/><path d="M28 7.500A15 15 0 0 1 15 30l7-11a8 8 0 0 0-3-11.500z" fill="#f9c020"/><circle cx="15" cy="15" r="7" fill="#fff"/><circle cx="15" cy="15" r="5.500" fill="#3b86ee"/></svg></button>
  <button class="tb" aria-label="Edge"><svg width="30" height="30" viewBox="0 0 30 30"><circle cx="15" cy="15" r="15" fill="#1679c8"/><path d="M1 11Q5 0 16 0q13 1 14 13 0 8-8 8-5 0-5-3 2-8-5-9-7 0-11 6z" fill="#3ec8a0"/><path d="M1 14Q5 5 12 8q-6 7 0 15 5 5 14 2-5 6-13 5Q1 27 1 14z" fill="#1a8fdc"/><path d="M15 12q-3 6 3 9 5 2 10-1-9 1-10-3 1-3-3-5z" fill="#1e3131"/></svg></button>
  <button class="tb run" aria-label="File Explorer"><svg width="29" height="25" viewBox="0 0 29 25"><path d="M0 0h11l3 3h14v20H0z" fill="#f5b52e"/><path d="M0 6h29v18H0z" fill="#fdd070"/><path d="M5 24v-9q0-3 3-3h13q3 0 3 3v9h-5v-6h-9v6z" fill="#3b93dc"/></svg></button>
  <button class="tb" aria-label="Store"><svg width="30" height="30" viewBox="0 0 30 30"><path d="M9 6V1h12v5" fill="none" stroke="#28a8ea" stroke-width="2.500"/><rect y="5" width="30" height="25" rx="3" fill="#f4f4f4"/><path d="M9 12h5v5H9z" fill="#e8432e"/><path d="M15 12h5v5h-5z" fill="#7db83a"/><path d="M9 18h5v5H9z" fill="#2a9fe8"/><path d="M15 18h5v5h-5z" fill="#f5b41e"/></svg></button>
  <button class="tb" aria-label="Mail"><svg width="30" height="29" viewBox="0 0 30 29"><path d="M0 10L15 0l15 10v19H0z" fill="#0a5fb4"/><path d="M2 10h26L15 21z" fill="#f2f2f2"/><path d="M0 10l15 10 15-10v19H0z" fill="#2ba4ee"/><path d="M0 29l30-19v19z" fill="#1c8fe0"/></svg></button>
  <button class="tb" aria-label="Download Manager"><svg width="30" height="28" viewBox="0 0 30 28"><path d="M14 4Q0 7 1 18q3 9 15 9" fill="none" stroke="#e84a20" stroke-width="3"/><path d="M14 7Q4 9 4 17t11 7" fill="none" stroke="#f2c81e" stroke-width="3"/><path d="M14 10Q8 11 8 16t7 5" fill="none" stroke="#3ab848" stroke-width="3"/><circle cx="20" cy="9" r="9" fill="#3a72c8"/><path d="M15 3q4-4 8-2l-1 5-5 2z" fill="#d8d08a"/><path d="M21 9l5-2 1 4-4 4z" fill="#b8b070"/><path d="M11 15l19 2-6 3-2 8-4-6-7 1z" fill="#25c02a" stroke="#0a5a10" stroke-width=".8"/></svg></button>
  <button class="tb" aria-label="Excel"><svg width="30" height="27" viewBox="0 0 30 27"><path d="M8 0h22v27H8z" fill="#1f7a44"/><path d="M19 0h11v7H19z" fill="#35c282"/><path d="M8 0h11v7H8z" fill="#23a366"/><path d="M0 6h17v16H0z" fill="#107c41"/><path d="M5 9l7 10M12 9L5 19" stroke="#fff" stroke-width="2.500"/></svg></button>
  <button class="tb run" aria-label="Photos"><svg width="29" height="28" viewBox="0 0 29 28"><path d="M0 0h29v28H0z" fill="#35a5ee"/><path d="M12 28l9-16 8 10v6z" fill="#1e74c8"/><path d="M0 20L10 9l16 19H0z" fill="#123c80"/><circle cx="19" cy="7" r="2.500" fill="#fff"/></svg></button>
  <button class="tb run" aria-label="Civil Academy"><svg width="30" height="30" viewBox="0 0 30 30"><path d="M0 0h30v30H0z" fill="#fff"/><path d="M21 1h8v6h-8z" fill="#1e3131"/><path d="M14 0l3 4-1 4 7 7H7l5-7-1-4z" fill="#1e2a66"/><g font-size="7" font-weight="700" text-anchor="middle" fill="#111"><text x="15" y="22">Civil</text><text x="15" y="28" font-size="6">Academy</text></g></svg></button>
  <button class="tb run cur" aria-label="Revit"><svg width="30" height="30" viewBox="0 0 30 30"><path d="M0 0h30v30H0z" fill="#b6d4ea"/><path d="M0 15q15-8 30 2v6H0z" fill="#6fa5d0"/><path d="M0 23h30v7H0z" fill="#dfe9f2"/><path d="M11 4l7-2 3 4-2 6-2 2 5 9h-4l-4-8-3 7H8l4-10z" fill="#1c2f72"/></svg></button>
  <div class="d-flex align-items-center ms-auto text-nowrap">
    <svg class="me-2" width="30" height="30" viewBox="0 0 30 30"><circle cx="14" cy="12" r="12" fill="#f6a51e"/><path d="M8 29a5 5 0 0 1 0-10 7 7 0 0 1 13-1 5 5 0 0 1 2 11z" fill="#bcdcf6"/></svg>
    <span class="weather">22°C</span><span class="weather ms-2 me-3" dir="rtl">مشمس جزئيًا</span>
    <div class="w30t"><svg width="16" height="9" fill="none" stroke="#fff" stroke-width="1.500"><path d="M1 8l7-7 7 7"/></svg></div>
    <div class="w30t"><svg width="21" height="18" fill="none" stroke="#fff" stroke-width="1.200"><path d="M1 6h4l4-4v14l-4-4H1zM12 6q2 3 0 6M15 4q3 5 0 10M18 2q4 7 0 14"/></svg></div>
    <div class="w30t"><svg width="20" height="22" viewBox="0 0 20 22"><path d="M9 0l8 3v7q-1 6-8 9-7-3-8-9V3z" fill="#fff"/><path d="M9 0v19M1 9h16" stroke="#1e3131" stroke-width="1"/><circle cx="14" cy="16" r="5.500" fill="#1f9a4c"/><path d="M11 16l2 2 4-4" fill="none" stroke="#fff" stroke-width="1.500"/></svg></div>
    <div class="w30t"><svg width="18" height="18" fill="none" stroke="#ddd" stroke-width="1.200"><path d="M1 15Q2 3 16 2M5 16q0-9 12-10M9 17q0-6 8-7"/><circle cx="14" cy="15" r="1.500" fill="#fff"/></svg></div>
    <div class="w30t"><svg width="16" height="20" fill="none" stroke="#fff" stroke-width="1.200"><path d="M2 6h8v8H2zM10 9l4-2v6l-4-2M3 3q4-3 8 0M3 17q4 3 8 0"/></svg></div>
    <div class="w30t"><svg width="21" height="16" fill="none" stroke="#ddd" stroke-width="1.200"><path d="M5 4h14v9H5zM9 6l5 5M14 6l-5 5M1 1v3h4V1M3 4v8"/></svg></div>
    <span class="ps-2">ENG</span>
    <div class="clock text-center ms-2"><div dir="rtl">07:46 ص</div><div dir="rtl">٢٠٢٣/٠٤/١٨</div></div>
    <svg class="ms-3" width="36" height="34" viewBox="0 0 36 34"><path d="M1 2h20v17H8l-4 4v-4H1z" fill="#fff"/><path d="M5 7h12M5 11h12M5 15h8" stroke="#1e3131" stroke-width="1.500"/><circle cx="22" cy="22" r="10" fill="#3c4747" stroke="#aaa"/><text x="22" y="27" text-anchor="middle" font-size="13" fill="#fff">٢</text></svg>
    <div class="vsep ms-2 me-2"></div>
  </div>
</footer>

<div class="wm position-absolute"><div class="wm-ar">مستقل</div><div class="wm-en">mostaql.com</div></div>

<script>
// Isometric structural model: slabs are painted bottom to top, each above its columns.
(function(){
  var out=[], RISE=78.5, C='#7a716e', D='#332f2e';
  function P(d,f,s,w){out.push('<path d="'+d+'" fill="'+(f||'none')+'" stroke="'+(s||'#000')+'" stroke-width="'+(w||1)+'" vector-effect="non-scaling-stroke"/>')}
  function pts(a,dy){return a.map(function(p,i){return (i?'L':'M')+p[0]+' '+(p[1]+(dy||0))}).join('')}
  function col(x,y1,y2,w){w=w||20;
    P('M'+(x-w/2)+' '+y1+'V'+y2+'l'+w/2+' 5V'+y1+'z',D,'#000');
    P('M'+x+' '+y1+'V'+(y2+5)+'l'+w/2+' -6V'+y1+'z','#665e5b','#000')}
  function pile(x,y1,y2){
    P('M'+(x-7)+' '+y1+'V'+(y2-4)+'l7 6 7 -6V'+y1+'z','#3c3736','#000');
    P('M'+(x+2)+' '+y1+'V'+(y2-6),'none','#5a5351')}
  var i,k,dy;
  for(i=0;i<14;i++) pile(190+42.2*i,1680+23*i,1978+26*i);
  var rb=[1090,1065,1040,1012,987,962,885,908,885,857,830,805,778,752,727,700];
  for(i=0;i<16;i++) pile(780+42.1*i,1960-25*i,1200+rb[i]);
  P('M80 1632L735 1986L1510 1516V1526L735 1998L80 1640Z','#74766a');
  P('M88 1595L735 1947V1990L88 1633Z','#353535');
  P('M1503 1480L735 1947V1990L1503 1522Z','#7c7d6a');
  P('M88 1595L735 1947L1503 1480L1430 1435L900 1200L225 1512Z','#a4a890');

  var right=[[1460,457],[1365,515],[1297,557],[1257,535],[1190,573],[1215,590],[1132,652],[1072,697],[1040,680],[1040,718],[735,903]];
  var back='L868 95L888 103L920 87L1155 245L1125 265L1155 285L1185 268L1332 370L1308 385L1345 410L1373 398L1460 457';
  function shift(d,dy){return d.replace(/([ML])(\S+) (\S+?)(?=[ML]|$)/g,function(m,c,x,y){return c+x+' '+(+y+dy)})}
  function slab(dy){
    return 'M125 '+(553+dy)+shift(back,dy)+pts(right,dy).replace('M','L')+'L700 '+(887+dy)+'L675 '+(902+dy)+'L125 '+(601+dy)+'Q82 '+(577+dy)+' 125 '+(553+dy)+'Z'}
  // podium floors with the curved left facade
  var r12=pts(right.slice().reverse(),947).replace('M','L'), r11=pts(right.slice().reverse(),858).replace('M','L');
  P('M225 1430Q215 1460 235 1490Q215 1510 222 1545Q235 1600 320 1615L395 1620Q450 1670 512 1722L560 1755L735 1850'+r12+'L1373 1345L1200 1150L400 1250Z',C,'#000');
  P('M1460 1315L1373 1256L1300 1220L1297 1415L1365 1373Z',C,'#000');
  P('M225 1465Q240 1515 320 1525L375 1530Q440 1600 512 1645L560 1683L575 1675L735 1761'+r11,'none','#000',2);
  P('M512 1725V1800L575 1766L560 1757Z','#4c4644');
  P('M512 1652V1722L560 1752L572 1690L560 1683Z','#615957','#615957');
  P('M512 1652V1800','none','#000',2);
  P('M512 1722L560 1755L735 1850','none','#000',2);
  P('M235 1490Q270 1525 320 1525','none','#000');
  col(413,1570,1655,16);
  col(267,1450,1650,24);col(340,1500,1700,20);col(640,1660,1858,26);
  col(143,1380,1595,20);
  P('M375 1530Q440 1600 512 1645M395 1620Q450 1670 512 1722','none','#000',2);

  for(k=10;k>=0;k--){
    dy=78*k;
    if(k<10){col(143,600+dy,656+dy,20);col(267,660+dy,708+dy,24);col(340,700+dy,760+dy,20);
      P('M512 '+(810+dy)+'V'+(858+dy)+'L550 '+(835+dy)+'V'+(820+dy)+'Z','#5d5653','#5d5653');P('M512 '+(810+dy)+'V'+(858+dy),'none','#000',2);
      col(638,870+dy,915+dy,24)}
    P(slab(dy+5),D,'#000');
    P(slab(dy),C,'#000');
    P('M103 '+(588+dy)+'L675 '+(904+dy)+'L700 '+(889+dy)+'L735 '+(905+dy),'none','#000',2);
  }
  for(i=0;i<12;i++)P('M1445 '+(472+78.3*i)+'l-36 20 36 24z','#fff');
  for(i=0;i<12;i++)P('M1210 '+(560+RISE*i)+'l-20 13 20 14zM1015 '+(672+RISE*i)+'l-18 12 18 12z','#4c4644');
  // ground-level stair
  P('M932 1572l60 10 -6 30 -50 -12z','#000');P('M975 1612l40 25 -48 75 -28 -20z','#2d2827');
  for(i=0;i<9;i++)P('M'+(980-4*i)+' '+(1622+8*i)+'l30 10','none','#a59b96');
  P('M910 1585L1015 1530M915 1508L1010 1455M915 1508L980 1535','none','#000');
  // full-height columns of the right facade
  P('M1345 522V1533l16 6V515z','#2b2827');P('M1361 517V1539l9 -6V512z','#5d5653');
  col(1453,462,1481,20);
  [[1300,560,1576,18],[1219,520,1626,14],[1121,585,1685,22],[1028,725,1743,26],[886,815,1830,28],[803,860,1880,20],[736,905,1918,20]].forEach(function(c){col(c[0],c[1],c[2],c[3])});
  for(k=0;k<=12;k++){dy=k<11?78*k:(k==11?858:947);
    P(pts(right.slice(0,5),dy),'none','#000',1.6);
    P(pts([[1225,590],[1132,652],[1072,697],[1040,680]],dy),'none','#000',1.6);
    P(pts([[1040,718],[735,903]],dy),'none','#000',1.6);
    P(pts([[1040,724],[735,909]],dy),'none','#2b2726',1);}
  // roof
  P('M762 170L810 138L877 180L827 210Z','#fff','#000',2);P('M820 145v64l14 -8v-52z',D);P('M834 201l12 -10v-35',C);
  P('M928 293L965 271L1023 298L985 323Z',C,'#000',2);P('M958 275v40l25 8v-40z',D);
  P('M485 543L519 524L555 548L525 567ZM571 595L635 555L678 580L612 620Z',C,'#000',1.5);P('M612 565v28h10v-30zM590 585l22 8v-18z',D);
  P('M421 390L497 432M326 450L412 500M412 496L330 448M508 778L592 730M515 780L598 732','none','#000',1);
  P('M985 490L1020 470L1240 340V435L1062 535Z','#6a625f','#000');
  col(868,432,483,14);P('M870 418L912 433L880 455','none','#000',2);
  P('M632 275L500 357L740 507L870 432Z',C);P('M500 357L740 507L870 432','none','#000',2);
  col(501,355,438,14);col(616,432,508,14);
  // stair kiosks
  P('M1165 372V475L1240 430V355Z','#352f2e');P('M1110 400V455L1165 425V375Z','#7a716e');
  col(1187,385,465,18);col(1235,358,432,18);
  P('M1110 333L1160 303L1180 320L1193 383Z','#4d4a4a');P('M1180 320L1245 355L1193 383Z','#a9aaa4');P('M1160 303L1245 355L1180 320Z','#82828c');
  P('M1010 450L1045 530L1085 520V440Z','#14100f');P('M1045 470l45 40M1052 500l35 28','none','#aaa');
  col(969,425,475,16);col(1122,428,508,16);col(1045,470,530,14);
  P('M962 425L1040 378L1045 472Z','#6a6563');P('M1040 378L1128 428L1045 472Z','#a9aaa4');P('M1040 378L1128 428L1048 402Z','#85858f');
  P('M1045 378L1158 303M1128 428L1165 370L1110 400','none','#000');
  // stair tower roof
  P('M920 450L600 647L705 715L797 663L895 725L1035 640L997 605L1025 592L1072 617L1130 582Z',C);
  P('M600 647L705 715L797 663L895 725L1035 640M997 605L1025 592L1072 617L1130 582','none','#000',2);
  P('M1035 640V720L1130 650V582L1072 617L1025 592L997 605Z',C,C);P('M1035 640L997 605L1025 592L1072 617L1130 582','none','#000',2);
  P('M1130 652L1072 697L1040 680','none','#000',2);
  col(598,650,728,18);col(705,715,793,14);col(792,663,740,14);col(893,722,802,14);col(1034,640,722,14);col(1124,585,660,16);
  document.getElementById('model').innerHTML=out.join('');

  var names=['Detail level','Visual style','Sun path','Shadows','Rendering','Crop view','Crop region','Lock view','Hide/isolate','Reveal hidden','View properties','Analytical model','Displacement','Constraints'];
  var g=['<path d="M1 3h16v12H1z" fill="#fff" stroke="#444"/><path d="M3 5h4v4H3zM11 5h4v4h-4zM7 9h4v4H7z" fill="#777"/>',
  '<path d="M2 8l4-5h11l-4 5v8H2zM2 8h11M13 16l4-5V3" fill="#cfe6f8" stroke="#1b63ae"/><path d="M4 11h7" stroke="#e03a20"/><path d="M4 14h7" stroke="#2fa43a"/>',
  '<circle cx="8" cy="8" r="4" fill="#f8c460" stroke="#d88a10"/><path d="M8 0v3M0 8h3M2 2l2 2M14 2l-2 2M2 14l2-2" stroke="#d88a10"/><path d="M10 10l7 7M17 10l-7 7" stroke="#a8441a" stroke-width="2"/>',
  '<circle cx="8" cy="7" r="5" fill="#cfe6f8" stroke="#3a86cc"/><path d="M2 15h8" stroke="#555" stroke-width="2"/><path d="M11 10l6 7M17 10l-6 7" stroke="#a8441a" stroke-width="2"/>',
  '<path d="M1 5l4 2 5-4 4 3v6l-5 3-5-3z" fill="#eee" stroke="#555"/><circle cx="14" cy="10" r="3" fill="#cfe6f8" stroke="#2a86d4"/><path d="M14 13v4" stroke="#333"/>',
  '<path d="M1 12h12M4 4v12M4 5h13M8 16V8h9" stroke="#1b63ae" stroke-width="1.500" fill="none"/><path d="M10 9l7 7M17 9l-7 7" stroke="#a8441a" stroke-width="2"/>',
  '<path d="M1 12h10M4 4v12M4 5h10M8 16V8h4" stroke="#1b63ae" stroke-width="1.500" fill="none"/><circle cx="14" cy="7" r="3" fill="#cfe6f8" stroke="#2a86d4"/><path d="M14 10v5" stroke="#333"/>',
  '<path d="M1 8l7-6 7 5v3M3 8v7h6M8 2v6" fill="none" stroke="#555"/><path d="M10 10h7v7h-7zM12 10V7h3v3" fill="#eee" stroke="#333"/>',
  '<path d="M1 5l4 7q4 2 5-2l6-4M5 12q-3-1-1-4M10 10q5 4 7-1l-2-4" fill="none" stroke="#444" stroke-width="1.500"/>',
  '<circle cx="9" cy="7" r="3" fill="#fff" stroke="#2a86d4" stroke-width="1.500"/><path d="M9 11v5" stroke="#2a86d4" stroke-width="2"/>',
  '<path d="M2 4h14v12H2z" fill="none" stroke="#222" stroke-width="1.500" stroke-dasharray="3 1"/><path d="M10 10h5v5h-5z" fill="#fff" stroke="#333"/>',
  '<path d="M2 7h10v9M2 7v9M6 4h9v9M6 4v12M2 11h12" fill="none" stroke="#444" stroke-width="1.500"/><path d="M3 12v5M8 12v5" stroke="#e03a20" stroke-width="1.500"/><circle cx="14" cy="7" r="3" fill="#cfe6f8" stroke="#2a86d4"/>',
  '<path d="M5 7l4-3h8v8l-4 4H5zM5 7h8v9M2 9v5M15 4v10" fill="#ddd" stroke="#444"/>',
  '<path d="M1 0v17M17 0v8M2 4h14M5 2L2 4l3 2M13 2l3 2-3 2M2 15h8" fill="none" stroke="#333"/><path d="M11 12h6v5h-6zM12 12V9h4v3" fill="#eee" stroke="#333"/>'];
  document.getElementById('viewtools').innerHTML=g.map(function(s,i){return '<button aria-label="'+names[i]+'" style="width:25px" class="d-flex justify-content-center"><svg width="18" height="18" viewBox="0 0 18 18">'+s+'</svg></button>'}).join('');
  var arrow='<path d="M9 6v11l3-3 2 4 2-1-2-4h4z" fill="#fff" stroke="#222" stroke-width=".8"/>', x='<path d="M10 1l6 6M16 1l-6 6" stroke="#a8441a" stroke-width="2"/>';
  var s=['<path d="M1 3h6v4H1zM9 3h7v4H9zM5 5h6" fill="none" stroke="#e08a10" stroke-width="2"/>'+arrow,
  '<path d="M1 10L9 3v12zM1 14h9" fill="none" stroke="#2a78c4" stroke-width="1.500"/>'+x+arrow,
  '<path d="M2 2h8v3H8v4h3v2H1V9h3V5H2zM6 11v6" fill="#f0a04a" stroke="#b85a1a"/>'+x+arrow,
  '<path d="M2 4l8-3v13l-8 3z" fill="#9fd0f2" stroke="#2a78c4"/>'+x+arrow,
  '<path d="M1 6h10M6 1v10M4 3l2-2 2 2M4 9l2 2 2-2" fill="none" stroke="#222"/>'+arrow];
  var sn=['Select links','Select underlay elements','Select pinned elements','Select elements by face','Drag elements on selection'];
  document.getElementById('seltools').innerHTML=s.map(function(t,i){return '<button aria-label="'+sn[i]+'" class="cellb" style="width:22px"><svg width="18" height="18" viewBox="0 0 18 18">'+t+'</svg></button>'}).join('')+
  '<button class="cellb bg-transparent pt-1" aria-label="Filter"><svg width="17" height="17" viewBox="0 0 17 17"><path d="M1 1h15l-6 7v7l-3 1V8z" fill="#b8bcc0" stroke="#555"/></svg>:0</button>';
})();
</script>
</body>
</html>
